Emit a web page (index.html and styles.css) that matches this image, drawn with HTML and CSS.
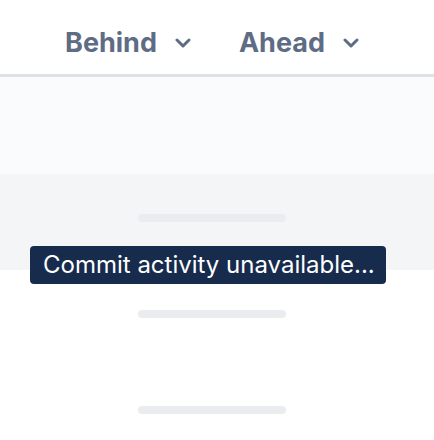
FILE: index.html
```html
<!DOCTYPE html>
<html lang="en">
  <head>
    <meta charset="UTF-8" />
    <meta name="viewport" content="width=device-width, initial-scale=1.0" />
    <title>Commit activity</title>
    <link rel="stylesheet" href="styles.css">
  </head>
  <body>
    <header class="tabs">
      <button class="tab">
        Behind
        <svg class="chevron" viewBox="0 0 16 10" width="16" height="10">
          <path d="M2 2l6 6 6-6" />
        </svg>
      </button>
      <button class="tab">
        Ahead
        <svg class="chevron" viewBox="0 0 16 10" width="16" height="10">
          <path d="M2 2l6 6 6-6" />
        </svg>
      </button>
    </header>

    <main class="rows">
      <div class="row row-top"></div>
      <div class="row row-grey"><span class="skeleton"></span></div>
      <div class="row"><span class="skeleton"></span></div>
      <div class="row"><span class="skeleton"></span></div>

      <div class="tooltip">Commit activity unavailable...</div>
    </main>
  </body>
</html>
```

FILE: styles.css
```css
body {
  margin: 0;
  font-family: Inter, "Noto Sans", sans-serif;
  background-color: #ffffff;
  overflow: hidden;
}

.tabs {
  display: flex;
  justify-content: center;
  gap: 48px;
  height: 77px;
  padding-right: 10px;
  border-bottom: 3px solid #dfe1e6;
  box-sizing: border-box;
}

.tab {
  display: flex;
  align-items: center;
  gap: 18px;
  padding: 10px 0 0;
  border: none;
  background: none;
  font-family: inherit;
  font-size: 27px;
  font-weight: 700;
  color: #5e6c84;
}

.chevron {
  fill: none;
  stroke: #5e6c84;
  stroke-width: 3;
  stroke-linecap: round;
  stroke-linejoin: round;
  margin-top: 2px;
}

.rows {
  position: relative;
}

.row {
  display: flex;
  justify-content: center;
  height: 96px;
  padding-top: 40px;
  box-sizing: border-box;
}

.row-top {
  height: 97px;
  background-color: #fafbfc;
}

.row-grey {
  background-color: #f4f5f7;
}

.skeleton {
  display: block;
  width: 148px;
  height: 8px;
  margin-right: 10px;
  border-radius: 4px;
  background-color: #ebecf0;
}

.tooltip {
  position: absolute;
  left: 30px;
  top: 169px;
  width: 356px;
  height: 38px;
  box-sizing: border-box;
  padding-left: 13px;
  border-radius: 4px;
  background-color: #172b4d;
  color: #ffffff;
  font-size: 24px;
  line-height: 38px;
  white-space: nowrap;
}
```
